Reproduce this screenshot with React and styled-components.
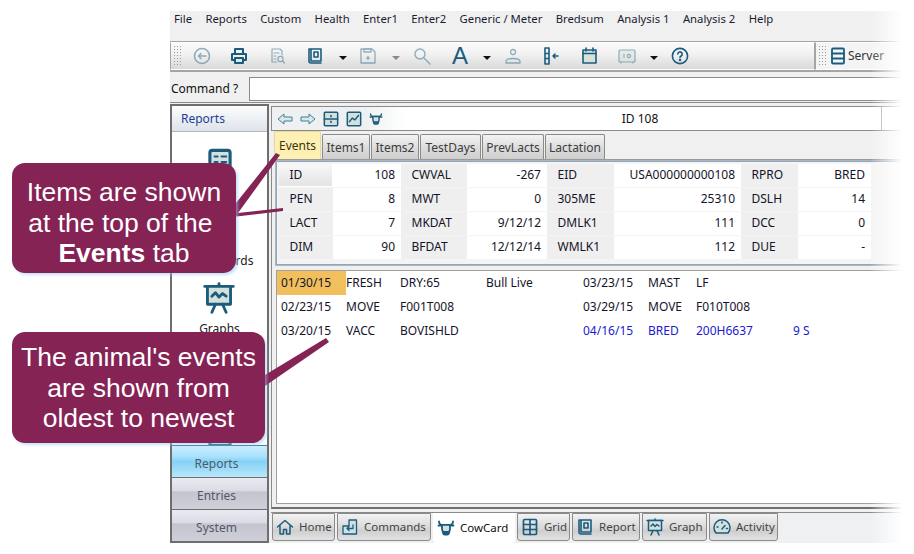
import React from "react";
import styled, { createGlobalStyle } from "styled-components";

const TEAL = "#1b5c7e";
const UI = `"Noto Sans", "DejaVu Sans", sans-serif`;

const Global = createGlobalStyle`
  html, body { margin: 0; padding: 0; background: #fff; }
  #root { width: 914px; height: 554px; }
`;

const Page = styled.div`
  position: relative;
  width: 914px;
  height: 554px;
  overflow: hidden;
  background: #fff;
  padding: 11px 0 0 170px;
  box-sizing: border-box;
  font: 12px/14px ${UI};
  color: #111;
`;
const Win = styled.div`
  width: 744px;
  height: 532px;
  display: flex;
  flex-direction: column;
  background: #f0f0f0;
`;
const Menu = styled.div`
  height: 30px;
  display: flex;
  align-items: flex-start;
  padding: 1px 0 0 4px;
  box-sizing: border-box;
  gap: 13.4px;
  font-size: 11.3px;
  color: #1c1c30;
`;
const Toolbars = styled.div`
  height: 31px;
  display: flex;
  box-sizing: border-box;
  border-top: 1px solid #a5a5a5;
  border-bottom: 2px solid #a5a5a5;
`;
const Bar = styled.div`
  display: flex;
  align-items: center;
  width: ${(p) => p.$w}px;
  box-sizing: border-box;
  height: 100%;
  border: 1px solid #fff;
  border-left: 1px solid #a5a5a5;
  border-right: 1px solid #a5a5a5;
  background: ${(p) => p.$plain ? "#f4f4f4" : "linear-gradient(#fafafa, #f2f2f2 40%, #d9d9d9)"};
`;
const Grip = styled.div`
  width: 9px;
  height: 22px;
  margin: 0 2px 0 2px;
  background: radial-gradient(circle, #9a9a9a 0.8px, transparent 1px) 0 0 / 3px 3px;
`;
const Tool = styled.div`
  width: 20px;
  flex: none;
  display: flex;
  justify-content: center;
  align-items: center;
  margin-left: ${(p) => p.$ml}px;
  opacity: ${(p) => p.$dim ? 0.45 : 1};
`;
const Caret = styled.div`
  width: 0;
  height: 0;
  border-left: 4px solid transparent;
  border-right: 4px solid transparent;
  border-top: 4px solid ${(p) => p.$dim ? "#888" : "#111"};
  margin-top: 4px;
`;
const ServerLabel = styled.div`
  color: #333;
  margin-left: 1px;
`;
const CommandRow = styled.div`
  height: 31px;
  display: flex;
  align-items: flex-start;
  padding-top: 5px;
  box-sizing: border-box;
  border-bottom: 1px solid #8a8a8a;
`;
const CommandLabel = styled.div`
  width: 79px;
  line-height: 24px;
  padding-left: 1px;
  box-sizing: border-box;
`;
const CommandInput = styled.div`
  flex: 1;
  height: 24px;
  box-sizing: border-box;
  background: #fff;
  border: 1px solid #8a8a8a;
  border-right: none;
`;
const Main = styled.div`
  flex: 1;
  display: flex;
  min-height: 0;
  margin-top: 1px;
`;
const Side = styled.div`
  width: 99px;
  flex: none;
  display: flex;
  flex-direction: column;
  box-sizing: border-box;
  border: 2px solid #6e6e6e;
  background: #fff;
`;
const SideHead = styled.div`
  height: 25px;
  flex: none;
  display: flex;
  align-items: center;
  padding-left: 9px;
  color: #1f3f96;
  background: linear-gradient(#fdfdfd, #dde3ea);
  border-bottom: 1px solid #b5b5b5;
`;
const SideList = styled.div`
  flex: 1;
  min-height: 0;
  overflow: hidden;
  padding-top: 13px;
  display: flex;
  flex-direction: column;
  align-items: center;
`;
const SideItem = styled.div`
  height: 68px;
  flex: none;
  display: flex;
  flex-direction: column;
  align-items: center;
  gap: 7px;
  color: #222;
`;
const SideIcon = styled.div`
  height: 34px;
  display: flex;
  align-items: center;
  justify-content: center;
`;
const SideBtn = styled.div`
  height: 32px;
  flex: none;
  box-sizing: border-box;
  display: flex;
  align-items: center;
  justify-content: center;
  padding: 4px 6px 0 0;
  color: #50586a;
  border-top: 1px solid ${(p) => p.$on ? "#3c7fa5" : "#6e6e6e"};
  background: ${(p) => p.$on
    ? "linear-gradient(#cbeeff, #a8e0fb 35%, #84d2f6 50%, #b9e6fb)"
    : "linear-gradient(#eaeaf2, #dcdce6 40%, #c5c5cf 45%, #cfcfd9)"};
`;
const Right = styled.div`
  flex: 1;
  min-width: 0;
  display: flex;
  flex-direction: column;
  padding: 2px 0 0 2px;
`;
const IdBar = styled.div`
  height: 25px;
  flex: none;
  box-sizing: border-box;
  display: flex;
  align-items: center;
  background: #fff;
  border-top: 1px solid #8a8a8a;
  border-bottom: 1px solid #8a8a8a;
  border-left: 1px solid #8a8a8a;
`;
const IdTools = styled.div`
  width: 133px;
  height: 100%;
  flex: none;
  display: flex;
  align-items: center;
  gap: 7px;
  padding-left: 5px;
  box-sizing: border-box;
  background: linear-gradient(90deg, #eef0f2 70%, #fff);
`;
const IdText = styled.div`
  width: 476px;
  box-sizing: border-box;
  padding-right: 6px;
  text-align: center;
`;
const IdEnd = styled.div`
  flex: 1;
  height: 100%;
  border-left: 1px solid #a8a8a8;
`;
const Tabs = styled.div`
  height: 28px;
  flex: none;
  display: flex;
  gap: 1px;
  padding-left: 3px;
  align-items: flex-end;
`;
const Tab = styled.div`
  width: ${(p) => p.$w}px;
  box-sizing: border-box;
  height: ${(p) => p.$on ? 28 : 25}px;
  padding-top: 1px;
  display: flex;
  align-items: center;
  justify-content: center;
  color: ${(p) => p.$on ? "#3d3410" : "#3d3d3d"};
  border: 1px solid ${(p) => p.$on ? "#e5d89a" : "#8a8a8a"};
  border-bottom: none;
  border-radius: 2px 2px 0 0;
  background: ${(p) => p.$on ? "#fdf0b2" : "linear-gradient(#f3f3f3, #dcdcdc 55%, #cfcfcf)"};
`;
const Frame = styled.div`
  flex: 1;
  min-height: 0;
  display: flex;
  flex-direction: column;
  padding: 1px 0 3px 4px;
  border-top: 1px solid #999;
  border-left: 1px solid #8a8a8a;
  border-bottom: 2px solid #6e6e6e;
  box-sizing: border-box;
`;
const Items = styled.div`
  height: 104px;
  flex: none;
  box-sizing: border-box;
  border: 1px solid #8aa8c4;
  border-right: none;
  padding: 2px 0 0 2px;
  background: #f4f4f4;
  outline: 1px solid #b5b5b5;
`;
const ItemsGrid = styled.div`
  display: grid;
  grid-template-columns: 54px 68px 66px 80px 67px 127px 57px 73px;
  grid-auto-rows: 23px;
  row-gap: 1px;
  width: 592px;
`;
const Label = styled.div`
  display: flex;
  align-items: center;
  padding: 0 0 1px 10.5px;
  color: #141428;
  background: ${(p) => p.$raised ? "linear-gradient(#f8f8f8, #e2e2e2)" : "#efefef"};
  box-shadow: ${(p) => p.$raised ? "inset -1px -1px 0 #fff" : "none"};
`;
const Value = styled.div`
  display: flex;
  align-items: center;
  justify-content: flex-end;
  padding: 0 6px 1px 0;
  color: #141428;
  background: #fff;
`;
const Events = styled.div`
  flex: 1;
  min-height: 0;
  margin-top: 5px;
  box-sizing: border-box;
  background: #fff;
  border: 1px solid #a0a0a0;
  border-right: none;
`;
const EventRow = styled.div`
  display: grid;
  grid-template-columns: 69px 54px 86px 97px 65px 48px 97px 60px;
  height: 24px;
  align-items: center;
`;
const EventCell = styled.div`
  height: 100%;
  display: flex;
  align-items: center;
  padding-left: ${(p) => p.$date ? 4 : 0}px;
  white-space: pre;
  color: ${(p) => p.$blue ? "#1a1ad2" : "#141428"};
  background: ${(p) => p.$hl ? "#f1c05c" : "transparent"};
`;
const Bottom = styled.div`
  height: 30px;
  flex: none;
  margin-top: 4px;
  display: flex;
  gap: 2px;
  padding-left: 1px;
  align-items: flex-start;
  background: #eef0f2;
  box-shadow: 0 -1px 0 #8a8a8a;
`;
const BottomTab = styled.div`
  width: ${(p) => p.$w}px;
  height: ${(p) => p.$on ? 30 : 28}px;
  box-sizing: border-box;
  display: flex;
  align-items: center;
  gap: 5px;
  padding-left: 3px;
  font-size: 11.5px;
  color: ${(p) => p.$on ? "#111" : "#444"};
  border: 1px solid ${(p) => p.$on ? "transparent" : "#8a8a8a"};
  border-top-color: ${(p) => p.$on ? "#fff" : "#8a8a8a"};
  border-radius: 0 0 3px 3px;
  background: ${(p) => p.$on ? "#fff" : "linear-gradient(#f2f2f2, #dadada 50%, #cfcfcf 65%, #e2e2e2)"};
`;
const Fade = styled.div`
  position: absolute;
  top: 0;
  right: 0;
  width: 44px;
  height: 100%;
  pointer-events: none;
  background: linear-gradient(90deg, rgba(255,255,255,0), #fff 32px);
`;
const Callout = styled.div`
  position: absolute;
  left: 12px;
  top: ${(p) => p.$top}px;
  width: ${(p) => p.$w}px;
  height: ${(p) => p.$h}px;
  box-sizing: border-box;
  padding-top: ${(p) => p.$pt}px;
  border-radius: 13px;
  background: #862355;
  box-shadow: 2px 2px 3px rgba(150, 200, 240, 0.55);
  color: #fff;
  text-align: center;
  font: 26.5px/30.5px "Liberation Sans", Arial, sans-serif;
`;
const Pointer = styled.svg`
  position: absolute;
  left: 0;
  top: 0;
  pointer-events: none;
`;

const Ico = ({ s = 18, children, sw = 1.6 }) => (
  <svg width={s} height={s} viewBox="0 0 18 18" fill="none" stroke={TEAL} strokeWidth={sw} strokeLinecap="round" strokeLinejoin="round">
    {children}
  </svg>
);
const Back = () => <Ico><circle cx="9" cy="9" r="7.5" /><path d="M13 9H6M8 6.5 5.5 9 8 11.5" /></Ico>;
const Printer = () => <Ico sw={2}><path d="M5 6V2h8v4M4 13H2V7h14v6h-2" /><path d="M5 11h8v5H5z" /></Ico>;
const Preview = () => <Ico sw={1.2}><path d="M8 15H3V2h8l2 2v4M5 6h5M5 9h2M5 12h2" /><circle cx="11.5" cy="12" r="2.6" /><path d="m13.5 14 2 2" /></Ico>;
const Book = () => <Ico><path d="M3 14V2h2v12M5 2h10v12H5M3 14a2 2 0 0 0 2 2h10M8 5h4v5H8z" /></Ico>;
const Save = () => <Ico sw={1.3}><path d="M2 2h11l3 3v11H2z" /><path d="M5 2h7v3H5z" /><circle cx="9" cy="11" r="1" fill={TEAL} /></Ico>;
const Search = () => <Ico sw={1.4}><circle cx="7" cy="7" r="5" /><path d="m11 11 6 6" /></Ico>;
const Letter = () => <span style={{ font: `24px/24px "Liberation Sans", sans-serif`, color: TEAL }}>A</span>;
const Person = () => <Ico sw={1.3}><circle cx="9" cy="5" r="2.5" /><path d="M2 16v-1.5c0-2 3-3 7-3s7 1 7 3V16z" /></Ico>;
const Split = () => <Ico><path d="M3 1h4v16H3zM3 6.5h4M3 11.5h4" /><path d="M16 9h-5M13 7l-2 2 2 2" /></Ico>;
const Calendar = () => <Ico><rect x="3" y="3" width="13" height="13" fill="#d9e2d8" /><path d="M3 6.5h13M6 1v3M13 1v3" /></Ico>;
const Safe = () => <Ico sw={1.2}><rect x="1" y="3" width="16" height="12" rx="1" fill="#d4e0dc" /><path d="M6 7.5v3" /><circle cx="11" cy="9" r="1.6" /><path d="M3 15v1M15 15v1" /></Ico>;
const Help = () => <Ico><circle cx="9" cy="9" r="7.6" /><path d="M6.8 7a2.2 2.2 0 1 1 3.3 2c-.8.5-1.1.9-1.1 1.6" /><circle cx="9" cy="13" r=".5" /></Ico>;
const Server = () => <Ico sw={1.8}><rect x="3" y="1.5" width="12" height="15" rx="1" /><path d="M3 6.5h12M3 11.5h12" /></Ico>;
const ArrowL = () => <svg width="16" height="14" viewBox="0 0 16 14" fill="#dbe6e6" stroke="#3f7f9b"><path d="M1 7 7 2v3h8v4H7v3z" /></svg>;
const ArrowR = () => <svg width="16" height="14" viewBox="0 0 16 14" fill="#dbe6e6" stroke="#3f7f9b"><path d="M15 7 9 2v3H1v4h8v3z" /></svg>;
const Cabinet = () => <Ico s={16} sw={1.7}><rect x="1.5" y="1.5" width="15" height="15" rx="1" fill="#d4e0dc" /><path d="M1.5 9h15M9 5v1.5M9 11.5V13" /></Ico>;
const Trend = () => <Ico s={16} sw={1.7}><rect x="1.5" y="1.5" width="15" height="15" rx="1" fill="#d4e0dc" /><path d="m4 12 3-4 3 2 4-5" /></Ico>;
const Cow = ({ s = 14 }) => (
  <Ico s={s} sw={1.8}>
    <path d="M2 2.500c0 1.500.8 3 2.500 3.300h9c1.700-.3 2.500-1.800 2.500-3.300" />
    <path d="M1.500 6.500h3M13.500 6.500h3" />
    <path d="M5 5.800h8v4.200l-1.200 4.500a1.500 1.500 0 0 1-1.500 1H7.700a1.500 1.500 0 0 1-1.500-1L5 10z" fill="#d4e0dc" />
    <path d="M7 13.500h4" strokeWidth="3" />
  </Ico>
);
const Dash = () => <Ico s={28} sw={1.3}><rect x="2.500" y="1.500" width="13" height="15" rx="1.500" fill="#d4e0dc" strokeWidth="2" /><path d="M5.500 5.500h2M10 5.500h3M5.500 9h2M10 9h3" /></Ico>;
const Easel = ({ s = 32, sw = 1.6 }) => <Ico s={s} sw={sw}><path d="M1 2.500h16" /><path d="M2.500 2.500h13v10h-13z" fill="#d4e0dc" /><path d="m5 8 2-2 2 2.500 2-2 2 1.500M7 12.500l-2 4.500M11 12.500l2 4.500M9 1v1" /></Ico>;
const Home = () => <Ico sw={1.5}><path d="M1.500 9 9 2.500 16.500 9M4 8v8h3.500v-4.500h3V16H14V8" /></Ico>;
const Cmd = () => <Ico sw={1.3}><path d="M8 2h7.500v14H2V8h6z" fill="#cfe0e0" /><path d="M12 7v3.500H6M8 8.500 6 10.500l2 2" /></Ico>;
const GridIco = () => <Ico sw={1.7}><rect x="2.500" y="1.500" width="13" height="15" rx="1" /><path d="M2.500 6.500h13M2.500 11.500h13M9 1.500v15" /></Ico>;
const Gauge = () => <Ico sw={1.5}><path d="M3 15a8 8 0 1 1 12 0z" fill="#d4e0dc" /><path d="m9 11 3-3.500M4 9h1M13.500 10.500h1M9 4v1" /></Ico>;

const menu = ["File", "Reports", "Custom", "Health", "Enter1", "Enter2", "Generic / Meter", "Bredsum", "Analysis 1", "Analysis 2", "Help"];
const tools = [
  { el: <Back />, ml: 8, dim: 1 },
  { el: <Printer />, ml: 17 },
  { el: <Preview />, ml: 19, dim: 1 },
  { el: <Book />, ml: 17 },
  { caret: 1, ml: 8 },
  { el: <Save />, ml: 5, dim: 1 },
  { caret: 2, ml: 8 },
  { el: <Search />, ml: 6, dim: 1 },
  { el: <Letter />, ml: 18 },
  { caret: 1, ml: 7 },
  { el: <Person />, ml: 6, dim: 1 },
  { el: <Split />, ml: 18 },
  { el: <Calendar />, ml: 18 },
  { el: <Safe />, ml: 18, dim: 1 },
  { caret: 1, ml: 7 },
  { el: <Help />, ml: 6 },
];
const tabs = [["Events", 47, 1], ["Items1", 48], ["Items2", 48], ["TestDays", 61], ["PrevLacts", 62], ["Lactation", 60]];
const grid = [
  ["ID", "108", "CWVAL", "-267", "EID", "USA000000000108", "RPRO", "BRED"],
  ["PEN", "8", "MWT", "0", "305ME", "25310", "DSLH", "14"],
  ["LACT", "7", "MKDAT", "9/12/12", "DMLK1", "111", "DCC", "0"],
  ["DIM", "90", "BFDAT", "12/12/14", "WMLK1", "112", "DUE", "-"],
];
const events = [
  [["01/30/15", "FRESH", "DRY:65", "Bull Live"], ["03/23/15", "MAST", "LF", ""], 0],
  [["02/23/15", "MOVE", "F001T008", ""], ["03/29/15", "MOVE", "F010T008", ""], 0],
  [["03/20/15", "VACC", "BOVISHLD", ""], ["04/16/15", "BRED", "200H6637", "9 S"], 1],
];
const bottom = [
  ["Home", 63, <Home />], ["Commands", 94, <Cmd />], ["CowCard", 82, <Cow s={18} />, 1],
  ["Grid", 53, <GridIco />], ["Report", 68, <Book />], ["Graph", 65, <Easel s={18} sw={1.5} />], ["Activity", 69, <Gauge />],
];

export default function App() {
  return (
    <Page>
      <Global />
      <Win>
        <Menu>{menu.map((m) => <span key={m}>{m}</span>)}</Menu>
        <Toolbars>
          <Bar $w={645}>
            <Grip />
            {tools.map((t, i) => (
              <Tool key={i} $ml={t.ml} $dim={t.dim}>
                {t.caret ? <Caret $dim={t.caret === 2} /> : t.el}
              </Tool>
            ))}
          </Bar>
          <Bar $w={99} $plain>
            <Grip />
            <Server />
            <ServerLabel>Server</ServerLabel>
          </Bar>
        </Toolbars>
        <CommandRow>
          <CommandLabel>Command ?</CommandLabel>
          <CommandInput />
        </CommandRow>
        <Main>
          <Side>
            <SideHead>Reports</SideHead>
            <SideList>
              <SideItem><SideIcon><Dash /></SideIcon></SideItem>
              <SideItem><SideIcon><Dash /></SideIcon>Dashboards</SideItem>
              <SideItem><SideIcon><Easel /></SideIcon>Graphs</SideItem>
              <SideItem><SideIcon><Dash /></SideIcon></SideItem>
              <SideItem><SideIcon><Dash /></SideIcon></SideItem>
            </SideList>
            <SideBtn $on>Reports</SideBtn>
            <SideBtn>Entries</SideBtn>
            <SideBtn>System</SideBtn>
          </Side>
          <Right>
            <IdBar>
              <IdTools><ArrowL /><ArrowR /><Cabinet /><Trend /><Cow /></IdTools>
              <IdText>ID 108</IdText>
              <IdEnd />
            </IdBar>
            <Tabs>
              {tabs.map(([t, w, on]) => <Tab key={t} $w={w} $on={on}>{t}</Tab>)}
            </Tabs>
            <Frame>
              <Items>
                <ItemsGrid>
                  {grid.flatMap((row, r) => row.map((c, i) => (
                    i % 2 === 0
                      ? <Label key={`${r}-${i}`} $raised={r === 0 && i === 0}>{c}</Label>
                      : <Value key={`${r}-${i}`}>{c}</Value>
                  )))}
                </ItemsGrid>
              </Items>
              <Events>
                {events.map(([a, b, blue], r) => (
                  <EventRow key={r}>
                    {a.map((c, i) => <EventCell key={i} $date={i === 0} $hl={r === 0 && i === 0}>{c}</EventCell>)}
                    {b.map((c, i) => <EventCell key={i} $blue={blue}>{c}</EventCell>)}
                  </EventRow>
                ))}
              </Events>
            </Frame>
            <Bottom>
              {bottom.map(([t, w, ic, on]) => <BottomTab key={t} $w={w} $on={on}>{ic}{t}</BottomTab>)}
            </Bottom>
          </Right>
        </Main>
      </Win>
      <Fade />
      <Pointer width="914" height="554" viewBox="0 0 914 554">
        <path d="M232 208 276 153 280 155 238 213 283 208 283 211 232 217z" fill="#862355" />
        <path d="M260 378 326 338 329 342 262 388z" fill="#862355" />
      </Pointer>
      <Callout $top={163} $w={224} $h={110} $pt={14}>
        Items are shown<br />at the top of the&nbsp;<br /><b>Events</b> tab
      </Callout>
      <Callout $top={332} $w={253} $h={111} $pt={10}>
        The animal's events<br />are shown from<br />oldest to newest
      </Callout>
    </Page>
  );
}
